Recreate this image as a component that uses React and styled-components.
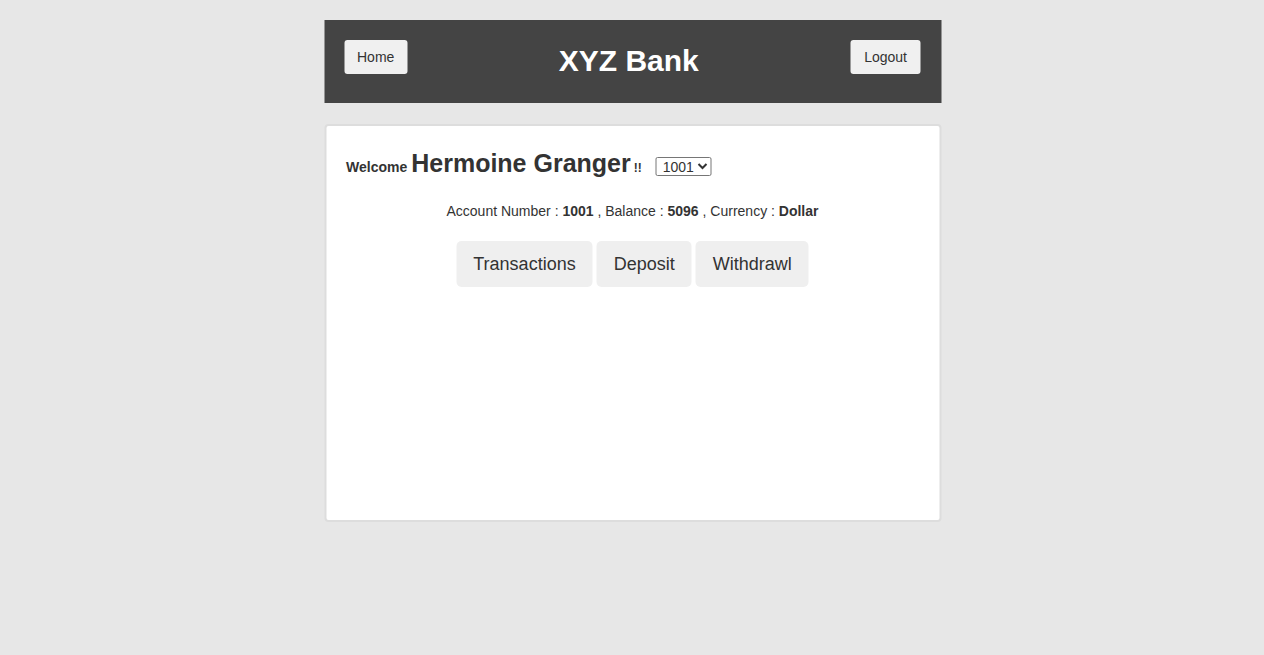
import React from 'react';
import styled, { createGlobalStyle } from 'styled-components';

const Global = createGlobalStyle`
  html, body {
    margin: 0;
    padding: 0;
    background: #e7e7e7;
    font-family: Arial, 'Liberation Sans', sans-serif;
    color: #333;
  }
`;

const Page = styled.div`
  width: 617px;
  margin: 0 auto;
  padding-top: 20px;
  transform: translateX(0.5px);
`;

const Header = styled.header`
  height: 83px;
  background: #444;
  display: flex;
  align-items: flex-start;
  justify-content: space-between;
  padding: 20px 20px 0;
  box-sizing: border-box;
`;

const NavButton = styled.button`
  height: 34px;
  padding: 0 ${(p) => p.$pad || 13}px;
  border: none;
  border-radius: 3px;
  background: #f0f0f0;
  color: #333;
  font-family: Arial, 'Liberation Sans', sans-serif;
  font-size: 14px;
  cursor: pointer;
`;

const Title = styled.h1`
  margin: 6px 0 0;
  font-size: 30px;
  font-weight: bold;
  color: #fff;
  line-height: 30px;
`;

const Card = styled.main`
  margin-top: 21px;
  height: 398px;
  box-sizing: border-box;
  background: #fff;
  border: 2px solid #ddd;
  border-radius: 4px;
  padding: 23px 20px;
`;

const Welcome = styled.div`
  display: flex;
  align-items: baseline;
  font-weight: bold;
  font-size: 14px;
`;

const Name = styled.span`
  font-size: 25px;
  margin-left: 4px;
`;

const Bang = styled.span`
  font-size: 12px;
  margin-left: 3px;
`;

const Select = styled.select`
  margin-left: 14px;
  font-family: Arial, 'Liberation Sans', sans-serif;
  font-size: 14px;
  color: #333;
  height: 19px;
  padding: 0 0 0 2px;
  border: 1px solid #767676;
  border-radius: 2px;
  background: #fff;
  align-self: center;
  transform: translateY(3px);
`;

const Info = styled.p`
  margin: 25px 0 0;
  text-align: center;
  font-size: 14px;
`;

const Tabs = styled.div`
  display: flex;
  justify-content: center;
  gap: 4px;
  margin-top: 22px;
`;

const Tab = styled.button`
  height: 46px;
  padding: 0 17px;
  border: none;
  border-radius: 5px;
  background: #efefef;
  color: #333;
  font-family: Arial, 'Liberation Sans', sans-serif;
  font-size: 18px;
  cursor: pointer;
`;

export default function App() {
  return (
    <>
      <Global />
      <Page>
        <Header>
          <NavButton>Home</NavButton>
          <Title>XYZ Bank</Title>
          <NavButton $pad={14}>Logout</NavButton>
        </Header>
        <Card>
          <Welcome>
            Welcome <Name>Hermoine Granger</Name>
            <Bang>!!</Bang>
            <Select defaultValue="1001">
              <option value="1001">1001</option>
              <option value="1002">1002</option>
              <option value="1003">1003</option>
            </Select>
          </Welcome>
          <Info>
            Account Number : <b>1001</b> , Balance : <b>5096</b> , Currency : <b>Dollar</b>
          </Info>
          <Tabs>
            <Tab>Transactions</Tab>
            <Tab>Deposit</Tab>
            <Tab>Withdrawl</Tab>
          </Tabs>
        </Card>
      </Page>
    </>
  );
}
